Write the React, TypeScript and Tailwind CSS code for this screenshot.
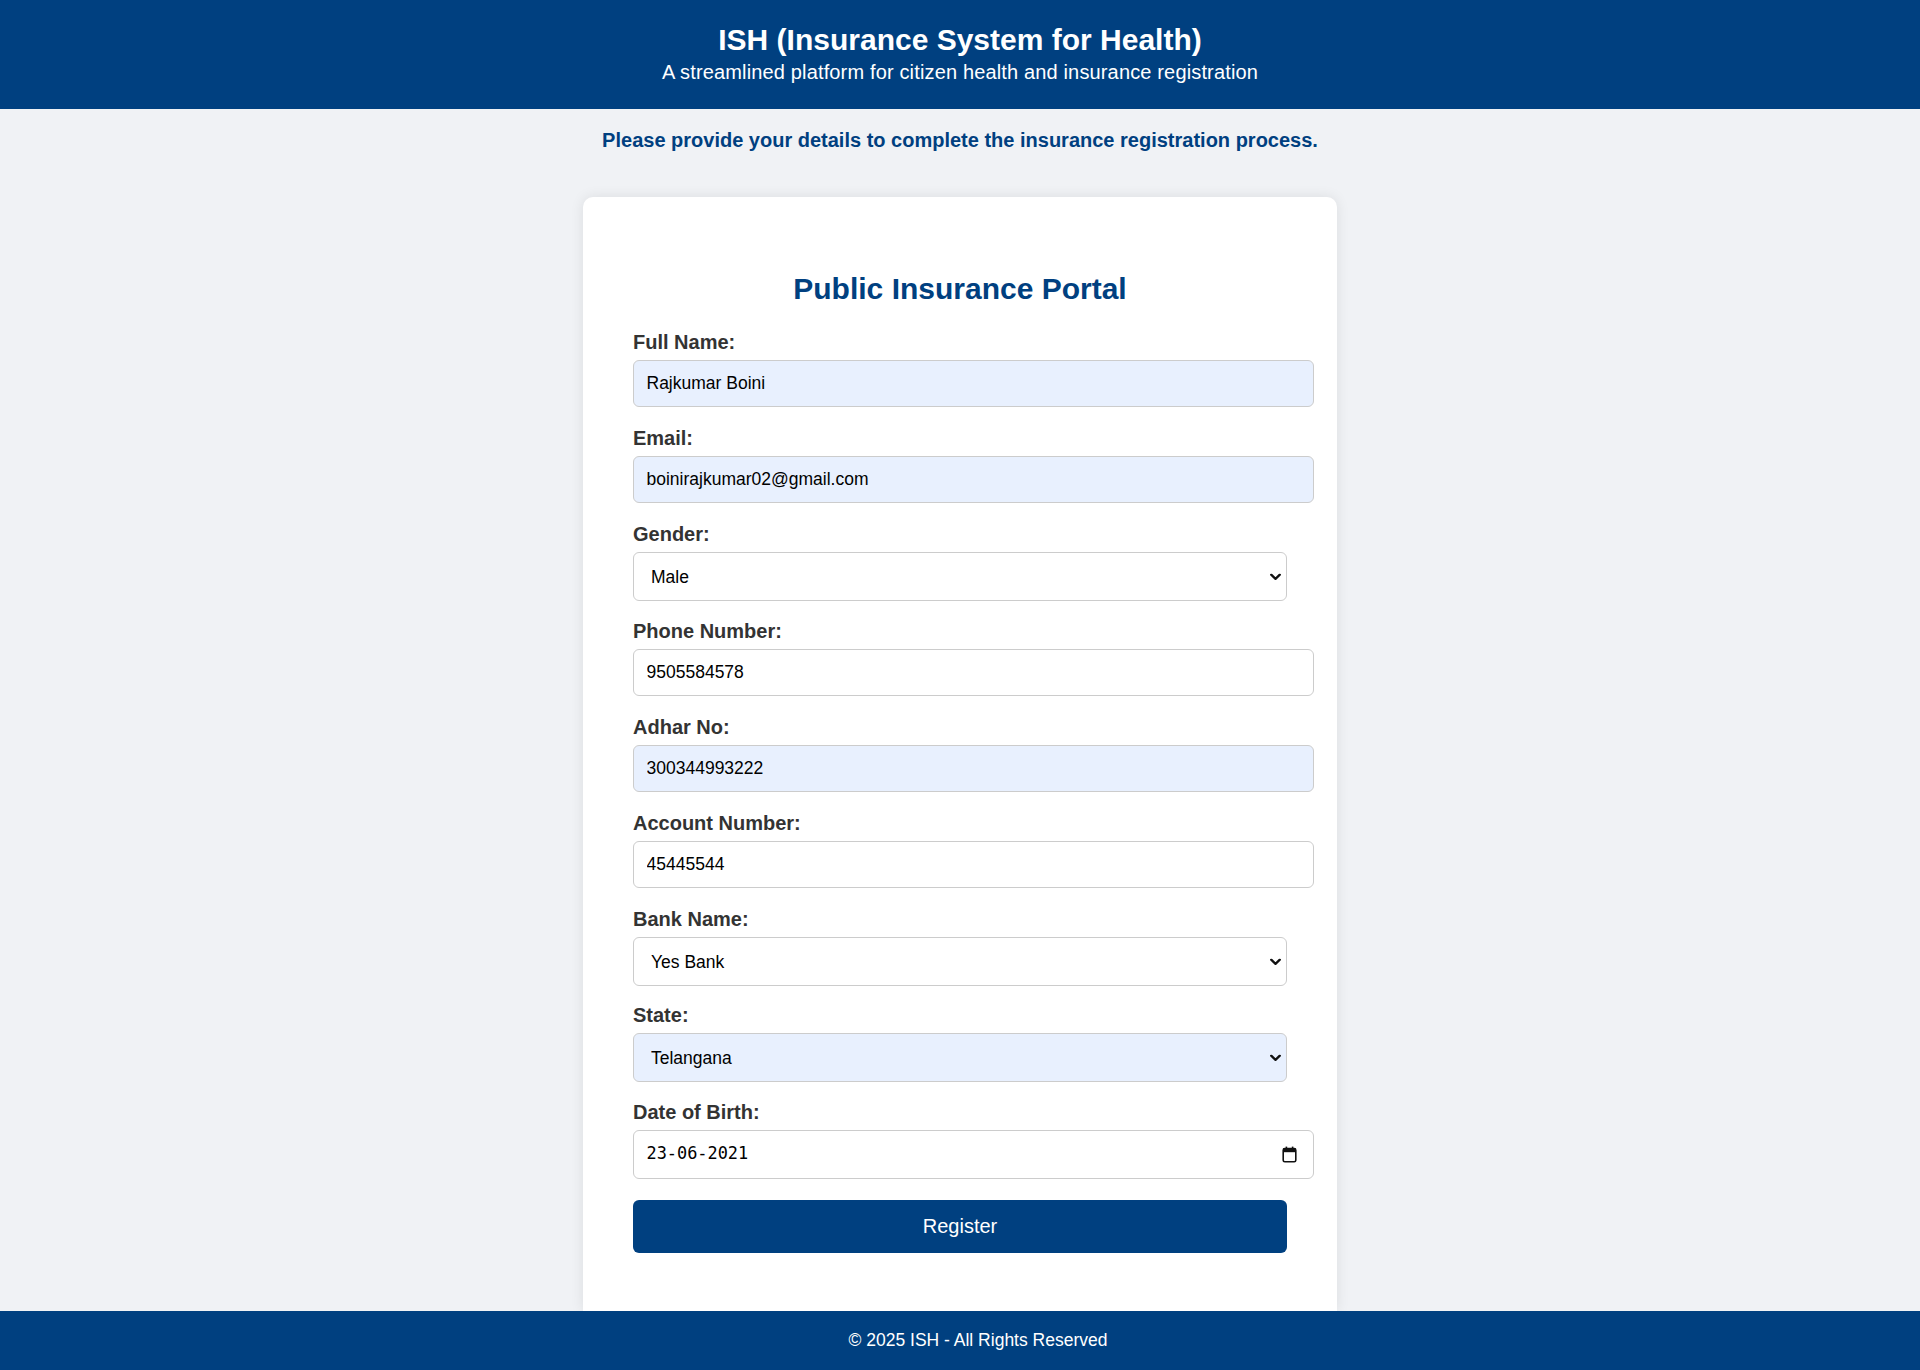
import { useState } from "react";

const sans = "font-['Liberation_Sans',Arial,sans-serif]";

const inputCls =
  "block h-[47px] w-[681px] rounded-[6px] border border-[#cccccc] px-[12.5px] text-[17.5px] text-black outline-none";

function Chevron() {
  return (
    <svg
      width="11"
      height="7"
      viewBox="0 0 11 7"
      className="pointer-events-none absolute right-[6px] top-1/2 -translate-y-1/2"
    >
      <path
        d="M1.2 1.2 L5.5 5.3 L9.8 1.2"
        fill="none"
        stroke="#111"
        strokeWidth="2.3"
        strokeLinecap="round"
        strokeLinejoin="round"
      />
    </svg>
  );
}

function CalendarIcon() {
  return (
    <svg width="15" height="17" viewBox="0 0 15 17">
      <rect x="1.2" y="2.6" width="12.6" height="13.2" rx="1.6" fill="none" stroke="#111" strokeWidth="1.6" />
      <rect x="1.2" y="2.6" width="12.6" height="3.6" fill="#111" />
      <rect x="3.6" y="0.6" width="1.6" height="3" fill="#111" />
      <rect x="9.8" y="0.6" width="1.6" height="3" fill="#111" />
    </svg>
  );
}

function Label({ children }: { children: React.ReactNode }) {
  return (
    <label className="mb-[6px] block text-[20px] font-bold leading-[23px] text-[#333333]">
      {children}
    </label>
  );
}

function TextField({
  label,
  value,
  filled,
}: {
  label: string;
  value: string;
  filled?: boolean;
}) {
  const [v, setV] = useState(value);
  return (
    <div>
      <Label>{label}</Label>
      <input
        value={v}
        onChange={(e) => setV(e.target.value)}
        className={`${inputCls} mb-[20.2px] ${filled ? "bg-[#e8f0fe]" : "bg-white"}`}
      />
    </div>
  );
}

function SelectField({
  label,
  value,
  options,
  filled,
}: {
  label: string;
  value: string;
  options: string[];
  filled?: boolean;
}) {
  const [v, setV] = useState(value);
  return (
    <div>
      <Label>{label}</Label>
      <div className="relative mb-[18.2px] w-[654px]">
        <select
          value={v}
          onChange={(e) => setV(e.target.value)}
          className={`block h-[49px] w-full appearance-none rounded-[6px] border border-[#cccccc] pl-[17px] pr-8 text-[17.5px] text-black outline-none ${
            filled ? "bg-[#e8f0fe]" : "bg-white"
          }`}
        >
          {options.map((o) => (
            <option key={o}>{o}</option>
          ))}
        </select>
        <Chevron />
      </div>
    </div>
  );
}

export default function App() {
  return (
    <div className={`flex min-h-screen flex-col bg-[#f0f2f5] ${sans}`}>
      {/* header */}
      <header className="flex h-[109px] flex-col items-center bg-[#004080] pt-[23px] text-white">
        <h1 className="text-[30px] font-bold leading-[34px]">
          ISH (Insurance System for Health)
        </h1>
        <p className="mt-[4px] text-[20px] leading-[23px] tracking-[0.15px]">
          A streamlined platform for citizen health and insurance registration
        </p>
      </header>

      <main className="flex flex-1 flex-col items-center">
        <p className="mt-[20px] text-[20px] font-bold leading-[22px] text-[#004080]">
          Please provide your details to complete the insurance registration process.
        </p>

        <div className="mt-[46px] w-[754px] flex-1 rounded-t-[10px] bg-white px-[50px] pt-[75px] shadow-[0_0_14px_rgba(0,0,0,0.09)]">
          <h2 className="mb-[25px] text-center text-[30px] font-bold leading-[34px] text-[#004080]">
            Public Insurance Portal
          </h2>

          <form onSubmit={(e) => e.preventDefault()}>
            <TextField label="Full Name:" value="Rajkumar Boini" filled />
            <TextField label="Email:" value="boinirajkumar02@gmail.com" filled />
            <SelectField
              label="Gender:"
              value="Male"
              options={["Select Gender", "Male", "Female", "Other"]}
            />
            <TextField label="Phone Number:" value="9505584578" />
            <TextField label="Adhar No:" value="300344993222" filled />
            <TextField label="Account Number:" value="45445544" />
            <SelectField
              label="Bank Name:"
              value="Yes Bank"
              options={["Select Bank", "SBI", "HDFC Bank", "ICICI Bank", "Yes Bank"]}
            />
            <SelectField
              label="State:"
              value="Telangana"
              options={["Select State", "Andhra Pradesh", "Karnataka", "Telangana"]}
              filled
            />

            <div>
              <Label>Date of Birth:</Label>
              <div className="mb-[21px] flex h-[49px] w-[681px] items-center justify-between rounded-[6px] border border-[#cccccc] bg-white pl-[12.5px] pr-[16px]">
                <span className="font-['DejaVu_Sans_Mono',monospace] text-[16.9px] text-black">
                  23-06-2021
                </span>
                <CalendarIcon />
              </div>
            </div>

            <button
              type="submit"
              className="block h-[53px] w-[654px] rounded-[6px] bg-[#004080] text-[20px] text-white"
            >
              Register
            </button>
          </form>
        </div>
      </main>

      <footer className="flex h-[59px] items-center justify-center bg-[#004080] pl-[36px] text-[17.5px] text-white">
        © 2025 ISH - All Rights Reserved
      </footer>
    </div>
  );
}
